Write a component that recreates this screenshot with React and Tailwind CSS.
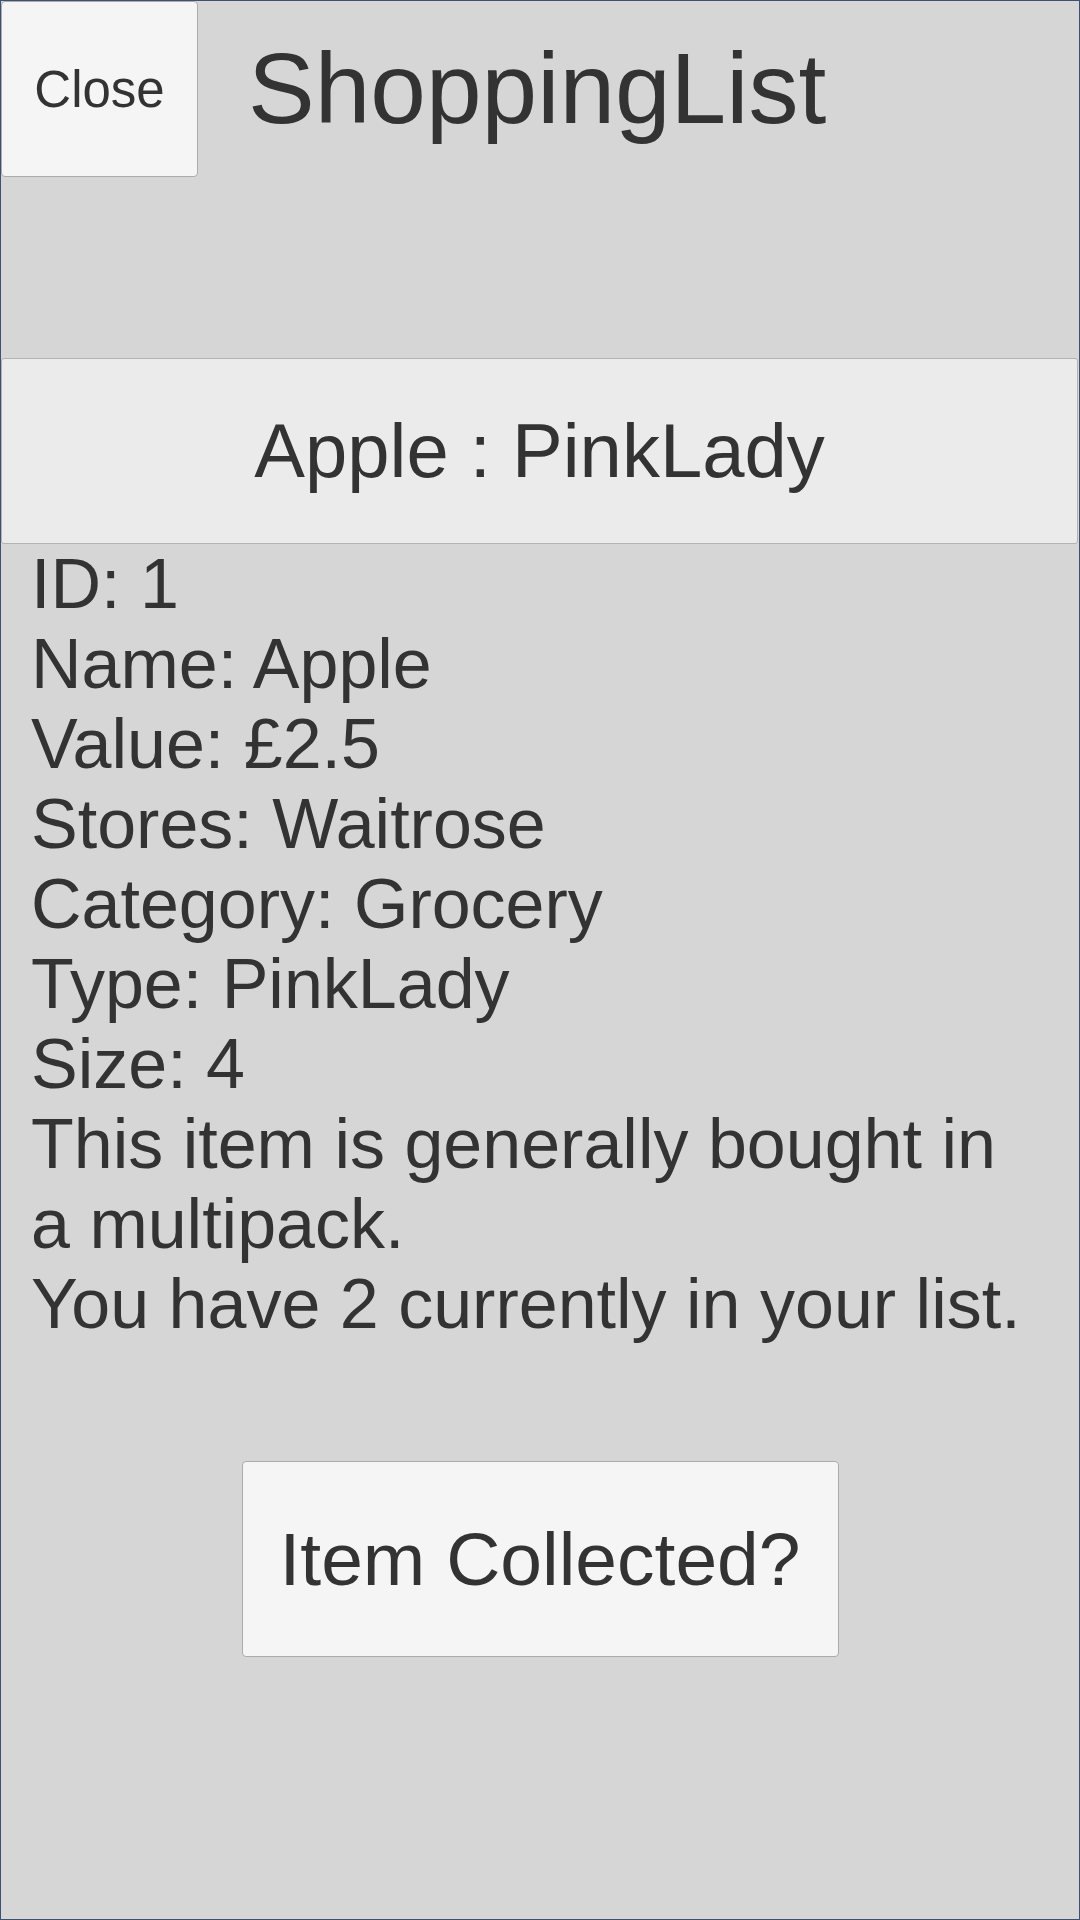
const details = [
  "ID: 1",
  "Name: Apple",
  "Value: £2.5",
  "Stores: Waitrose",
  "Category: Grocery",
  "Type: PinkLady",
  "Size: 4",
  "This item is generally bought in a multipack.",
  "You have 2 currently in your list.",
];

const App = () => {
  return (
    <div
      className="w-[1080px] h-[1920px] border border-[#3f5170] bg-[#d6d6d6] text-[#333333] overflow-hidden"
      style={{ fontFamily: '"Liberation Sans", Arial, sans-serif' }}
    >
      {/* Header */}
      <div className="flex items-start">
        <button className="w-[197px] h-[176px] rounded-[4px] border border-[#ababab] bg-[#f5f5f5] text-[51px] leading-none">
          Close
        </button>
        <h1 className="ml-[50px] mt-[37px] text-[100px] leading-[100px] font-normal">
          ShoppingList
        </h1>
      </div>

      {/* Item title */}
      <div className="mt-[181px] h-[186px] mr-[1px] flex items-center justify-center rounded-[3px] border border-[#b3b3b3] bg-[#ebebeb] text-[76px] leading-none">
        Apple : PinkLady
      </div>

      {/* Details */}
      <div className="pl-[30px] w-[1035px] text-[70px] leading-[80px]">
        {details.map((line, i) => (
          <p key={i}>{line}</p>
        ))}
      </div>

      <div className="flex justify-center mt-[117px]">
        <button className="w-[597px] h-[196px] rounded-[4px] border border-[#ababab] bg-[#f5f5f5] text-[75px] leading-none">
          Item Collected?
        </button>
      </div>
    </div>
  );
};

export default App;
